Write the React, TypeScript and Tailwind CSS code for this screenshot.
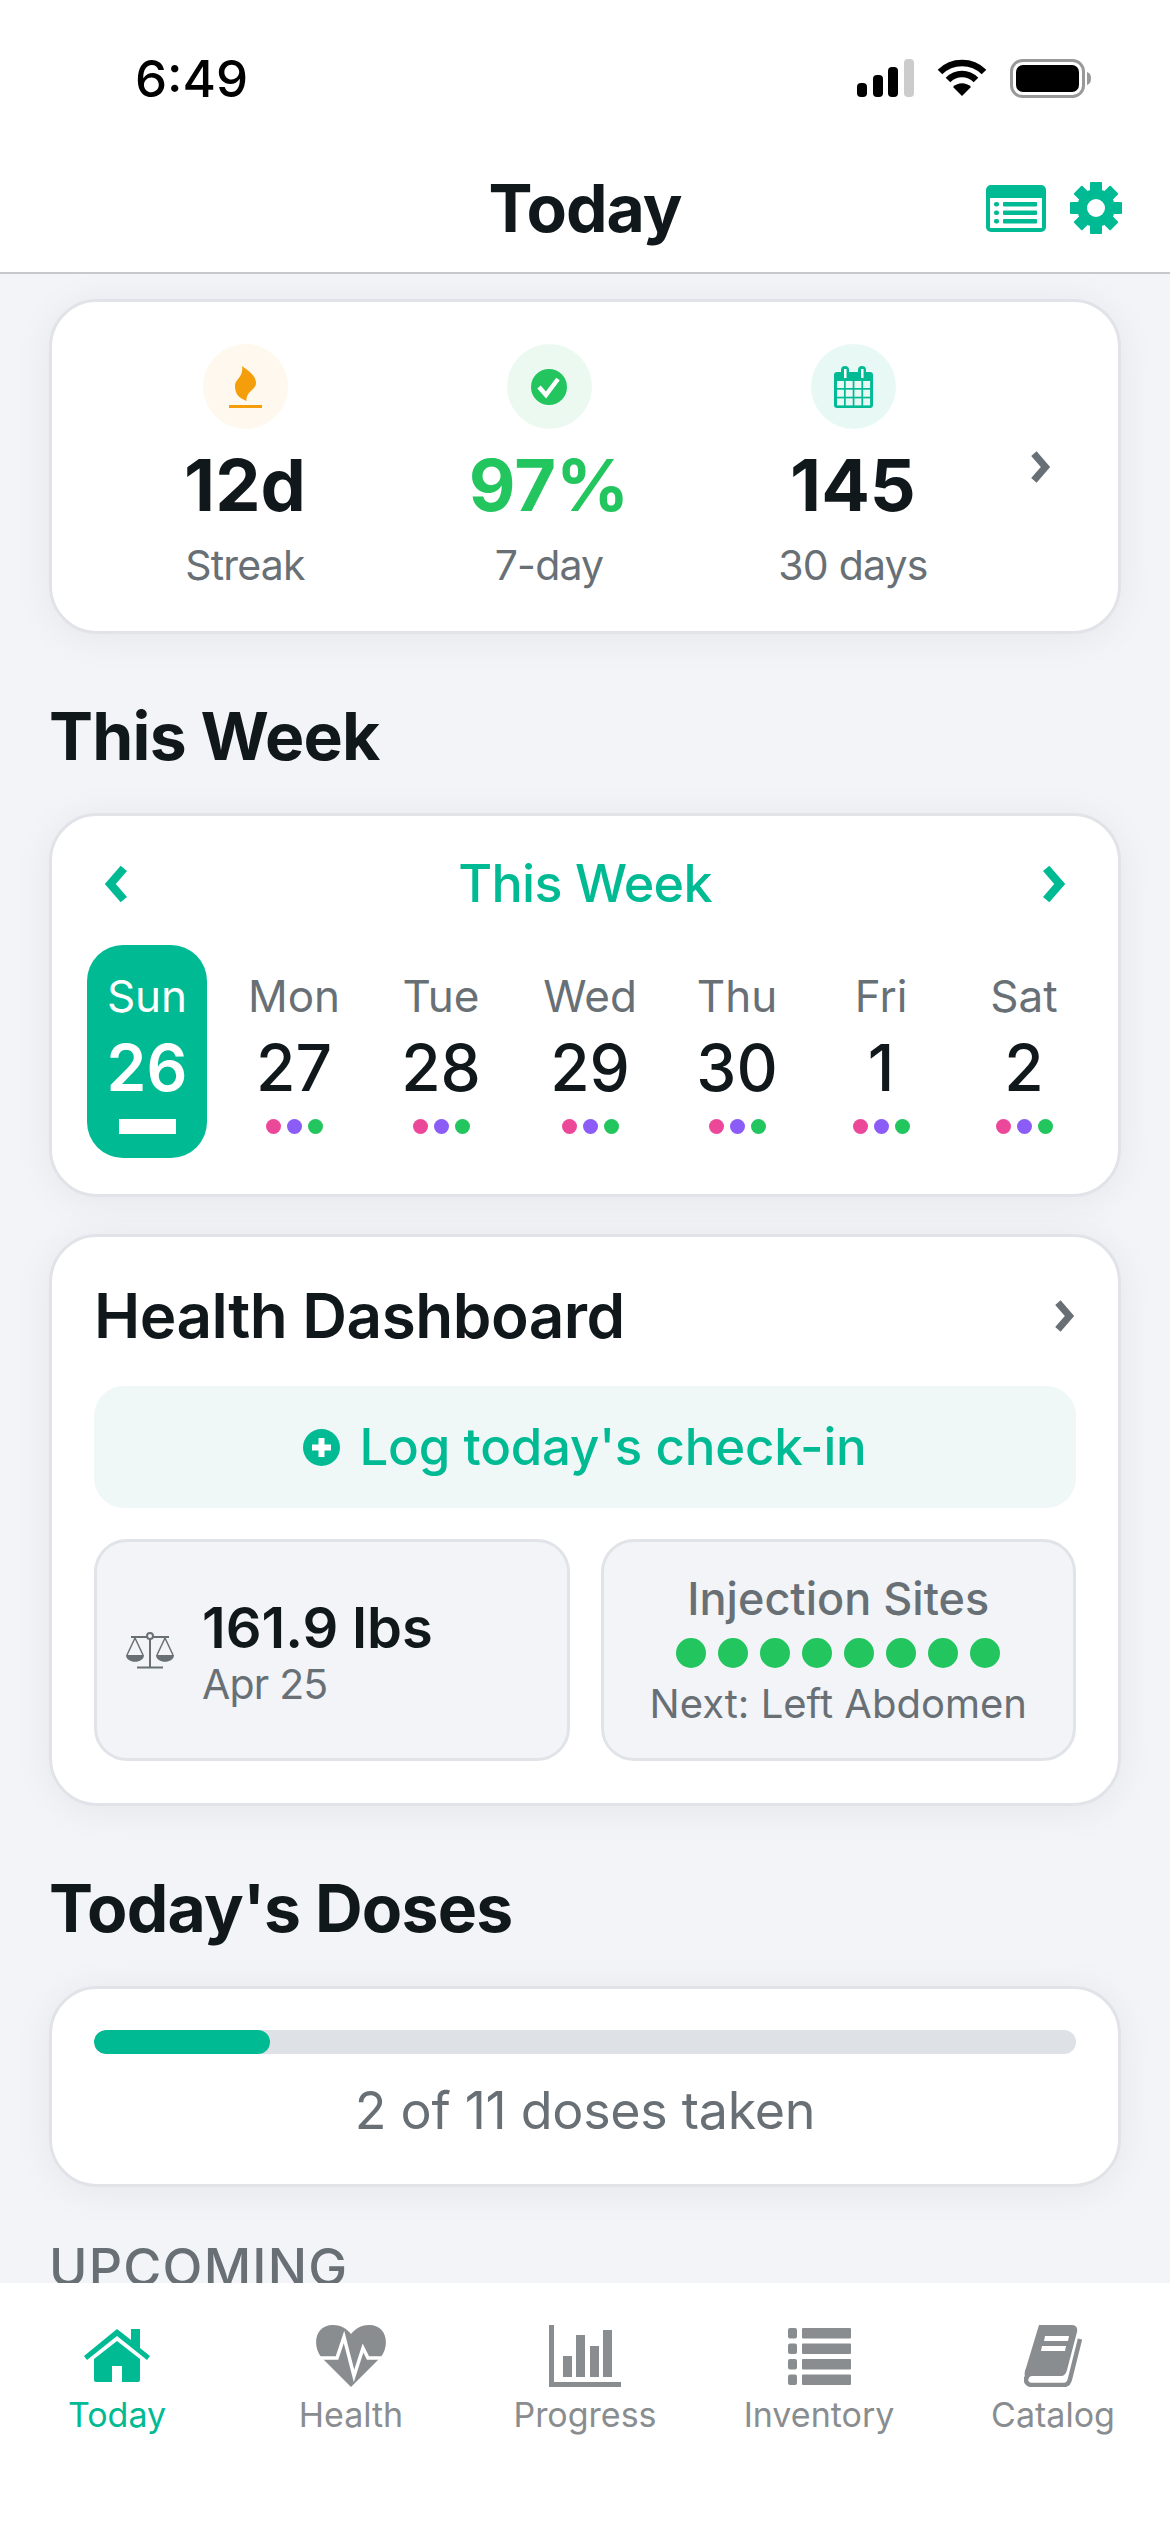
import type { ReactNode } from "react"

function Chevron({ left = false, className = "" }: { left?: boolean; className?: string }) {
  return (
    <svg viewBox="0 0 24 36" className={className} fill="none" stroke="currentColor" strokeWidth="8" strokeLinejoin="miter">
      <polyline points={left ? "20,3 7,18 20,33" : "4,3 17,18 4,33"} />
    </svg>
  )
}

function Gear() {
  const angles = ["rotate-0", "rotate-45", "rotate-90", "rotate-[135deg]"]
  return (
    <div className="relative h-[52px] w-[52px]">
      {angles.map((a) => (
        <div key={a} className={`absolute left-[20px] top-0 h-[52px] w-[12px] rounded-[1px] bg-[#00ba94] ${a}`} />
      ))}
      <div className="absolute left-[7px] top-[7px] h-[38px] w-[38px] rounded-full bg-[#00ba94]" />
      <div className="absolute left-[17px] top-[17px] h-[18px] w-[18px] rounded-full bg-white" />
    </div>
  )
}

function TableIcon() {
  return (
    <svg viewBox="0 0 60 47" className="h-[47px] w-[60px]">
      <rect width="60" height="47" rx="5" fill="#00ba94" />
      <rect x="4" y="13" width="52" height="30" fill="#fff" />
      {[17, 25.5, 34].map((y) => (
        <g key={y} fill="#00ba94">
          <rect x="8" y={y} width="5" height="4.5" rx="2" />
          <rect x="17" y={y} width="34" height="4.5" rx="1" />
        </g>
      ))}
    </svg>
  )
}

function FlameIcon() {
  return (
    <svg viewBox="0 0 33 42" className="h-[42px] w-[33px]">
      <path d="M13 0C20 5 27 10 27 17C27 24 17 25 17.5 35C10 32 6 28 6 20C6 13 15 11 13 0Z" fill="#f59e0b" />
      <rect x="0" y="39" width="33" height="3.5" fill="#f59e0b" />
    </svg>
  )
}

function CheckIcon() {
  return (
    <svg viewBox="0 0 36 36" className="h-[36px] w-[36px]">
      <circle cx="18" cy="18" r="18" fill="#22c55e" />
      <polyline points="8,18 15,26 27,10" fill="none" stroke="#fff" strokeWidth="4.5" />
    </svg>
  )
}

function CalendarIcon() {
  const cells = []
  for (let r = 0; r < 3; r++) {
    for (let c = 0; c < 4; c++) {
      cells.push(<rect key={`${r}-${c}`} x={3 + c * 8.7} y={15 + r * 8.7} width="7" height="7" fill="#e8f8f5" />)
    }
  }
  return (
    <svg viewBox="0 0 39 42" className="h-[42px] w-[39px]">
      <rect x="0" y="6" width="39" height="36" rx="3" fill="#00ba94" />
      <rect x="7" y="0" width="8" height="14" rx="4" fill="#00ba94" />
      <rect x="24" y="0" width="8" height="14" rx="4" fill="#00ba94" />
      <rect x="10" y="3" width="2.5" height="9" fill="#fff" />
      <rect x="27" y="3" width="2.5" height="9" fill="#fff" />
      {cells}
    </svg>
  )
}

function ScaleIcon() {
  return (
    <svg viewBox="0 0 50 38" className="h-[38px] w-[50px]" fill="none" stroke="#687076" strokeWidth="2">
      <line x1="25" y1="2" x2="25" y2="36" />
      <line x1="12" y1="36.5" x2="38" y2="36.5" />
      <line x1="6" y1="6" x2="44" y2="6" />
      <circle cx="25" cy="5" r="3" fill="#f2f4f8" />
      <path d="M10 7L2 24M10 7L18 24M40 7L32 24M40 7L48 24" strokeWidth="1.5" />
      <path d="M1 24H19C19 33 1 33 1 24Z" fill="#687076" stroke="none" />
      <path d="M31 24H49C49 33 31 33 31 24Z" fill="#687076" stroke="none" />
    </svg>
  )
}

function PlusIcon() {
  return (
    <svg viewBox="0 0 37 37" className="h-[37px] w-[37px]">
      <circle cx="18.5" cy="18.5" r="18.5" fill="#00ba94" />
      <path d="M18.5 9V28M9 18.5H28" stroke="#fff" strokeWidth="6" />
    </svg>
  )
}

function HomeIcon() {
  return (
    <svg viewBox="0 0 66 54" className="h-[54px] w-[66px]" fill="#00ba94">
      <path d="M33 0L47 11V0H56V19L66 27L63 31L33 7L3 31L0 27Z" />
      <path d="M33 12L56 30V51Q56 53 54 53H38V37H28V53H12Q10 53 10 51V30Z" />
    </svg>
  )
}

function HeartIcon() {
  return (
    <svg viewBox="0 0 72 62" className="h-[62px] w-[72px]">
      <path d="M36 62L6 32C-3 20 0 0 18 0C27 0 33 5 36 9C39 5 45 0 54 0C72 0 75 20 66 32Z" fill="#8a8d90" />
      <polyline points="0,33 22,33 29,12 39,51 48,23 53,33 72,33" fill="none" stroke="#fff" strokeWidth="3.5" />
    </svg>
  )
}

function ChartIcon() {
  return (
    <svg viewBox="0 0 72 62" className="h-[62px] w-[72px]" fill="#8a8d90">
      <rect x="0" y="0" width="5" height="62" />
      <rect x="0" y="57" width="72" height="5" />
      <rect x="14" y="31" width="9" height="21" />
      <rect x="27" y="10" width="9" height="42" />
      <rect x="41" y="21" width="9" height="31" />
      <rect x="54" y="5" width="9" height="47" />
    </svg>
  )
}

function ListIcon() {
  return (
    <svg viewBox="0 0 63 57" className="h-[57px] w-[63px]" fill="#8a8d90">
      {[0, 15.5, 31, 46.5].map((y) => (
        <g key={y}>
          <rect x="0" y={y} width="9" height="10.5" rx="2" />
          <rect x="14" y={y} width="49" height="10.5" rx="1" />
        </g>
      ))}
    </svg>
  )
}

function BookIcon() {
  return (
    <svg viewBox="0 0 58 62" className="h-[62px] w-[58px]">
      <path d="M15 0H48C52 0 54 3 53 7L43 45C42 49 40 51 37 51H8C5 51 4 54 5 55L1 52C0 49 1 45 2 43Z" fill="#8a8d90" />
      <path d="M56 14L46 54C45 58 43 60 40 60H8C3 60 1 56 2 52" fill="none" stroke="#8a8d90" strokeWidth="4.5" />
      <path d="M21 11H45L44 16H20Z" fill="#fff" />
      <path d="M18 21H42L41 26H17Z" fill="#fff" />
    </svg>
  )
}

function Card({ className, children }: { className: string; children: ReactNode }) {
  return (
    <div className={`rounded-[48px] border-[3px] border-[#e1e3e8] bg-white shadow-[0_4px_40px_rgba(0,0,0,0.06)] ${className}`}>
      {children}
    </div>
  )
}

const stats = [
  { icon: <FlameIcon />, bg: "bg-[#fef8ee]", value: "12d", color: "text-[#11181c]", label: "Streak" },
  { icon: <CheckIcon />, bg: "bg-[#ecf9f1]", value: "97%", color: "text-[#22c55e]", label: "7-day" },
  { icon: <CalendarIcon />, bg: "bg-[#e8f8f5]", value: "145", color: "text-[#11181c]", label: "30 days" },
]

const days = [
  { name: "Sun", num: "26", w: "w-[120px]", active: true },
  { name: "Mon", num: "27", w: "w-[120px]" },
  { name: "Tue", num: "28", w: "w-[120px]" },
  { name: "Wed", num: "29", w: "w-[124px]" },
  { name: "Thu", num: "30", w: "w-[116px]" },
  { name: "Fri", num: "1", w: "w-[118px]" },
  { name: "Sat", num: "2", w: "w-[114px]" },
]

const tabs = [
  { label: "Today", icon: <HomeIcon />, active: true },
  { label: "Health", icon: <HeartIcon /> },
  { label: "Progress", icon: <ChartIcon /> },
  { label: "Inventory", icon: <ListIcon /> },
  { label: "Catalog", icon: <BookIcon /> },
]

export default function App() {
  return (
    <div className="flex h-[2532px] w-[1170px] flex-col overflow-hidden bg-[#f2f4f8] font-['Inter',sans-serif] text-[#11181c]">
      {/* Status bar + title */}
      <header className="h-[274px] shrink-0 border-b-2 border-[#c7c8ca] bg-white">
        <div className="flex h-[156px] items-center justify-between pl-[135px] pr-[79px]">
          <span className="text-[51px] font-medium leading-none text-black">6:49</span>
          <div className="flex items-center gap-[23px]">
            <svg viewBox="0 0 57 38" className="h-[38px] w-[57px]">
              <rect x="0" y="24" width="10" height="14" rx="4" fill="#000" />
              <rect x="16" y="16" width="10" height="22" rx="4" fill="#000" />
              <rect x="31" y="8" width="10" height="30" rx="4" fill="#000" />
              <rect x="47" y="0" width="10" height="38" rx="4" fill="#ccc" />
            </svg>
            <svg viewBox="0 0 50 38" className="h-[38px] w-[50px]" fill="none" stroke="#000" strokeWidth="6.5">
              <path d="M3 13C15 1 35 1 47 13" />
              <path d="M11 21C19 13 31 13 39 21" />
              <path d="M25 37L16 28C21 23 29 23 34 28Z" fill="#000" stroke="none" />
            </svg>
            <svg viewBox="0 0 81 39" className="h-[39px] w-[81px]">
              <rect x="1.5" y="1.5" width="72" height="36" rx="11" fill="none" stroke="#999" strokeWidth="3" />
              <rect x="6" y="6" width="63" height="27" rx="7" fill="#000" />
              <path d="M77 13C80 14 81 16 81 19.5C81 23 80 25 77 26Z" fill="#999" />
            </svg>
          </div>
        </div>
        <div className="flex h-[104px] items-center">
          <div className="flex-1" />
          <h1 className="text-[66px] font-bold leading-none tracking-[-1px]">Today</h1>
          <div className="flex-1">
            <div className="mr-[48px] flex items-center justify-end gap-[24px]">
              <TableIcon />
              <Gear />
            </div>
          </div>
        </div>
      </header>

      {/* Scroll content */}
      <main className="min-h-0 flex-1 overflow-hidden px-[49px] pt-[25px]">
        <Card className="flex items-center pb-[41px] pl-[41px] pt-[42px]">
          {stats.map((s) => (
            <div key={s.label} className="flex w-[304px] flex-col items-center">
              <div className={`flex h-[85px] w-[85px] items-center justify-center rounded-full ${s.bg}`}>{s.icon}</div>
              <div className={`mt-[16px] text-[72px] font-bold leading-[80px] ${s.color}`}>{s.value}</div>
              <div className="mt-[15px] text-[41px] leading-[50px] tracking-[-0.8px] text-[#687076]">{s.label}</div>
            </div>
          ))}
          <Chevron className="ml-[25px] h-[32px] w-[22px] text-[#687076]" />
        </Card>

        <h2 className="mb-[37px] mt-[62px] text-[66px] font-bold leading-[80px] tracking-[-0.8px]">This Week</h2>

        <Card className="px-[35px] pb-[36px] pt-[38px]">
          <div className="flex h-[60px] items-center justify-between px-[16px]">
            <Chevron left className="h-[38px] w-[25px] text-[#00ba94]" />
            <span className="text-[52px] font-medium leading-[60px] tracking-[-0.7px] text-[#00ba94]">This Week</span>
            <Chevron className="h-[38px] w-[25px] text-[#00ba94]" />
          </div>
          <div className="mt-[31px] flex gap-[27px]">
            {days.map((d) => (
              <div
                key={d.name}
                className={`flex h-[213px] flex-col items-center rounded-[36px] pt-[26px] ${d.w} ${d.active ? "bg-[#00ba94]" : ""}`}
              >
                <div className={`text-[44px] leading-[50px] ${d.active ? "text-white" : "text-[#687076]"}`}>{d.name}</div>
                <div className={`mt-[9px] text-[64px] leading-[76px] ${d.active ? "font-semibold text-white" : "font-medium text-[#11181c]"}`}>{d.num}</div>
                {d.active ? (
                  <div className="mt-[13px] h-[15px] w-[57px] bg-white" />
                ) : (
                  <div className="mt-[13px] flex gap-[6px]">
                    <div className="h-[15px] w-[15px] rounded-full bg-[#ec4899]" />
                    <div className="h-[15px] w-[15px] rounded-full bg-[#8b5cf6]" />
                    <div className="h-[15px] w-[15px] rounded-full bg-[#22c55e]" />
                  </div>
                )}
              </div>
            ))}
          </div>
        </Card>

        <Card className="mt-[37px] px-[42px] pb-[42px] pt-[41px]">
          <div className="flex h-[76px] items-center justify-between">
            <span className="text-[62px] font-semibold leading-[76px] tracking-[-0.5px]">Health Dashboard</span>
            <Chevron className="h-[32px] w-[22px] text-[#687076]" />
          </div>
          <div className="mt-[32px] flex h-[122px] items-center justify-center gap-[19px] rounded-[30px] bg-[#eff8f6]">
            <PlusIcon />
            <span className="text-[51px] font-medium tracking-[-0.2px] text-[#00ba94]">Log today's check-in</span>
          </div>
          <div className="mt-[31px] grid grid-cols-2 gap-[31px]">
            <div className="flex h-[222px] items-center gap-[27px] rounded-[33px] border-[3px] border-[#e0e3e8] bg-[#f2f4f8] pl-[28px]">
              <ScaleIcon />
              <div>
                <div className="mt-[2px] text-[56px] font-semibold leading-[66px]">161.9 lbs</div>
                <div className="text-[41px] leading-[46px] tracking-[-0.8px] text-[#687076]">Apr 25</div>
              </div>
            </div>
            <div className="flex h-[222px] flex-col items-center justify-center rounded-[33px] border-[3px] border-[#e0e3e8] bg-[#f2f4f8]">
              <div className="text-[45px] font-medium leading-[56px] text-[#687076]">Injection Sites</div>
              <div className="mt-[11px] flex gap-[12px]">
                {[1, 2, 3, 4, 5, 6, 7, 8].map((n) => (
                  <div key={n} className="h-[30px] w-[30px] rounded-full bg-[#22c55e]" />
                ))}
              </div>
              <div className="mt-[11px] text-[40px] leading-[50px] text-[#687076]">Next: Left Abdomen</div>
            </div>
          </div>
        </Card>

        <h2 className="mb-[38px] mt-[62px] text-[66px] font-bold leading-[80px] tracking-[-0.8px]">Today's Doses</h2>

        <Card className="px-[42px] pb-[43px] pt-[41px]">
          <div className="h-[24px] overflow-hidden rounded-full bg-[#dee2e6]">
            <div className="h-full w-[176px] rounded-full bg-[#00ba94]" />
          </div>
          <div className="mt-[27px] text-center text-[52px] leading-[60px] tracking-[-0.3px] text-[#687076]">2 of 11 doses taken</div>
        </Card>

        <div className="mt-[51px] text-[52px] font-medium leading-[60px] tracking-[1.2px] text-[#687076]">UPCOMING</div>
      </main>

      {/* Tab bar */}
      <nav className="flex h-[249px] shrink-0 bg-white pt-[42px]">
        {tabs.map((t) => (
          <div key={t.label} className="flex w-[234px] flex-col items-center">
            <div className="flex h-[62px] items-center justify-center">{t.icon}</div>
            <div className={`mt-[6px] text-[34px] leading-[44px] ${t.active ? "text-[#00ba94]" : "text-[#8a8d90]"}`}>{t.label}</div>
          </div>
        ))}
      </nav>
    </div>
  )
}
